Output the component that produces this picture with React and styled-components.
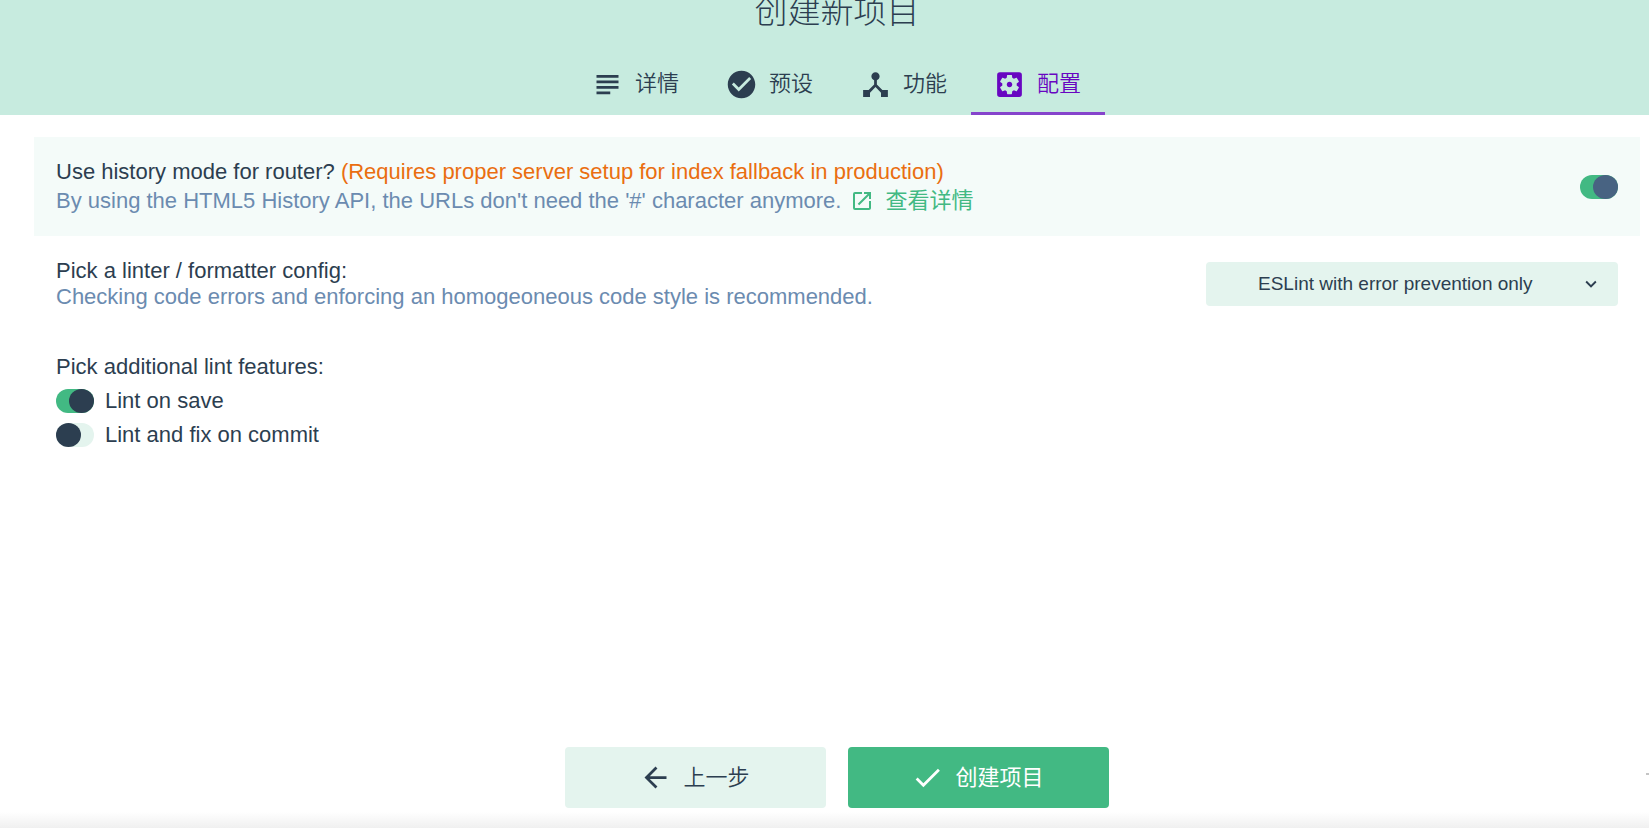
import React, { useState } from "react";
import styled, { createGlobalStyle, css } from "styled-components";
import {
  MdSubject,
  MdCheckCircle,
  MdDeviceHub,
  MdSettingsApplications,
  MdOpenInNew,
  MdArrowBack,
  MdCheck,
  MdKeyboardArrowDown,
} from "react-icons/md";

const color = {
  text: "#2c3e50",
  muted: "#6b8bb0",
  green: "#42b983",
  header: "#c7ebdf",
  soft: "#e4f4ee",
  hover: "#f4fbf9",
  purple: "#6806c1",
  orange: "#ea6e10",
};

const GlobalStyle = createGlobalStyle`
  * { box-sizing: border-box; }
  body {
    margin: 0;
    background: #fff;
    color: ${color.text};
    font-family: "Liberation Sans", "Noto Sans CJK SC", sans-serif;
    font-size: 22px;
    line-height: 26px;
  }
  button, select { font: inherit; color: inherit; border: 0; cursor: pointer; }
`;

const Page = styled.div`
  min-height: 100vh;
  display: flex;
  flex-direction: column;
`;

const Header = styled.header`
  background: ${color.header};
  padding: 0 9px 0 34px;
  display: flex;
  flex-direction: column;
  align-items: center;
  gap: 29px;
`;

const Title = styled.h1`
  margin: 0;
  font-size: 33px;
  line-height: 24px;
  font-weight: 300;
`;

const Tabs = styled.div`
  display: flex;
`;

const Tab = styled.button`
  display: flex;
  align-items: center;
  gap: 11px;
  height: 62px;
  padding: 0 24px 0 22px;
  background: linear-gradient(#8644cc, #8644cc) bottom / 100% 3px no-repeat;
  color: ${color.purple};
  font-weight: 350;
  ${(p) =>
    !p.$active &&
    css`
      background: none;
      color: ${color.text};
    `}
`;

const Main = styled.main`
  flex: 1;
  padding: 22px 9px 22px 34px;
`;

const Item = styled.section`
  display: flex;
  align-items: center;
  justify-content: space-between;
  gap: 22px;
  padding: 22px;
  background: ${(p) => (p.$highlighted ? color.hover : "transparent")};
`;

const Copy = styled.div`
  flex: 1;
`;

const Prompt = styled.label`
  display: block;
`;

const Warning = styled.span`
  color: ${color.orange};
`;

const Description = styled.div`
  display: flex;
  align-items: center;
  gap: 9px;
  padding-top: ${(p) => (p.$withLink ? 3 : 0)}px;
  color: ${color.muted};
`;

const MoreLink = styled.a`
  display: flex;
  align-items: center;
  gap: 11px;
  color: ${color.green};
  text-decoration: none;
`;

const Switch = styled.input`
  appearance: none;
  flex: none;
  display: flex;
  width: 38px;
  height: 24px;
  margin: 0;
  border-radius: 12px;
  background: ${color.soft};
  cursor: pointer;
  &::before {
    content: "";
    width: 25px;
    height: 24px;
    border-radius: 50%;
    background: ${(p) => (p.$light ? "#486382" : color.text)};
  }
  &:checked {
    background: ${color.green};
    justify-content: flex-end;
  }
`;

const SelectBox = styled.div`
  display: grid;
  width: 412px;
  align-items: center;
  > * {
    grid-area: 1 / 1;
  }
  > svg {
    justify-self: end;
    margin-right: 16px;
    pointer-events: none;
  }
`;

const Select = styled.select`
  appearance: none;
  width: 100%;
  height: 44px;
  padding: 0 44px 0 52px;
  border-radius: 4px;
  background: ${color.soft};
  font-size: 19px;
`;

const Features = styled.fieldset`
  flex: 1;
  margin: 0;
  padding: 0;
  border: 0;
`;

const FeaturesTitle = styled.legend`
  padding: 0 0 4px;
`;

const Feature = styled.label`
  display: flex;
  align-items: center;
  gap: 11px;
  width: fit-content;
  height: 34px;
  cursor: pointer;
`;

const Footer = styled.footer`
  position: relative;
  display: flex;
  justify-content: center;
  gap: 22px;
  padding: 0 9px 20px 34px;
  background: linear-gradient(to top, #f0f0f0, #fff 16px);
`;

const EdgeMark = styled.span`
  position: absolute;
  top: 26px;
  right: 0;
  width: 3px;
  height: 2px;
  background: #c4c4c4;
`;

const Button = styled.button`
  display: flex;
  align-items: center;
  justify-content: center;
  gap: 11px;
  width: 261px;
  height: 61px;
  padding: 0 24px 0 22px;
  border-radius: 4px;
  background: ${(p) => (p.$primary ? color.green : color.soft)};
  color: ${(p) => (p.$primary ? "#fff" : color.text)};
  font-weight: ${(p) => (p.$primary ? 400 : 350)};
`;

const tabs = [
  { label: "详情", Icon: MdSubject },
  { label: "预设", Icon: MdCheckCircle },
  { label: "功能", Icon: MdDeviceHub },
  { label: "配置", Icon: MdSettingsApplications },
];

export default function App() {
  const [active, setActive] = useState("配置");
  return (
    <>
      <GlobalStyle />
      <Page lang="zh-CN">
        <Header>
          <Title>创建新项目</Title>
          <Tabs role="tablist">
            {tabs.map(({ label, Icon }) => (
              <Tab
                key={label}
                type="button"
                role="tab"
                aria-selected={label === active}
                $active={label === active}
                onClick={() => setActive(label)}
              >
                <Icon size={33} />
                <span>{label}</span>
              </Tab>
            ))}
          </Tabs>
        </Header>
        <Main>
          <Item $highlighted>
            <Copy>
              <Prompt htmlFor="history">
                Use history mode for router?{" "}
                <Warning>(Requires proper server setup for index fallback in production)</Warning>
              </Prompt>
              <Description $withLink>
                <span>By using the HTML5 History API, the URLs don't need the '#' character anymore.</span>
                <MoreLink href="#history-mode">
                  <MdOpenInNew size={24} />
                  <span>查看详情</span>
                </MoreLink>
              </Description>
            </Copy>
            <Switch id="history" type="checkbox" role="switch" defaultChecked $light />
          </Item>
          <Item>
            <Copy>
              <Prompt htmlFor="linter">Pick a linter / formatter config:</Prompt>
              <Description>
                Checking code errors and enforcing an homogeoneous code style is recommended.
              </Description>
            </Copy>
            <SelectBox>
              <Select id="linter" defaultValue="error">
                <option value="error">ESLint with error prevention only</option>
              </Select>
              <MdKeyboardArrowDown size={22} />
            </SelectBox>
          </Item>
          <Item>
            <Features>
              <FeaturesTitle>Pick additional lint features:</FeaturesTitle>
              <Feature>
                <Switch type="checkbox" role="switch" defaultChecked />
                <span>Lint on save</span>
              </Feature>
              <Feature>
                <Switch type="checkbox" role="switch" />
                <span>Lint and fix on commit</span>
              </Feature>
            </Features>
          </Item>
        </Main>
        <Footer>
          <Button type="button">
            <MdArrowBack size={33} />
            <span>上一步</span>
          </Button>
          <Button type="button" $primary>
            <MdCheck size={33} />
            <span>创建项目</span>
          </Button>
          <EdgeMark />
        </Footer>
      </Page>
    </>
  );
}
